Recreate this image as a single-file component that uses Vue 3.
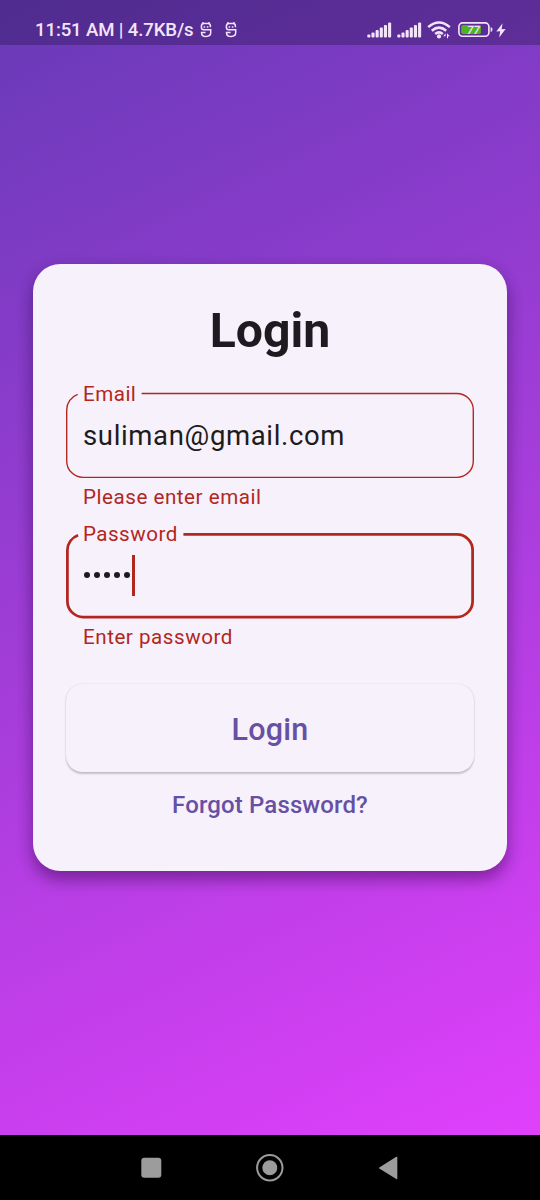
<script setup>
const signals = [0, 1]
const bars = [3, 5, 7.5, 10, 12.5, 15]
const fields = [
  {
    name: 'Email',
    value: 'suliman@gmail.com',
    error: 'Please enter email',
    outline: 'M76.6 2.5H391.8A16.5 16.5 0 0 1 408.3 19V69.9A16.5 16.5 0 0 1 391.8 86.4H18.2A16.5 16.5 0 0 1 1.7 69.9V19A16.5 16.5 0 0 1 12.7 3.4',
    focused: false,
  },
  {
    name: 'Password',
    value: 5,
    error: 'Enter password',
    outline: 'M118.4 3.3H391.8A15.8 15.8 0 0 1 407.6 19.1V70.2A15.8 15.8 0 0 1 391.8 86H18.2A15.8 15.8 0 0 1 2.4 70.2V19.1A15.8 15.8 0 0 1 13.1 4.2',
    focused: true,
  },
]
</script>

<template>
  <div class="screen">
    <header class="status">
      <span class="clock">11:51 AM | 4.7KB/s</span>
      <svg v-for="n in signals" :key="'s' + n" class="face" viewBox="0 0 12 16">
        <path d="M2.4.4 3.6 1.6M9.6.4 8.4 1.6M10.4 5.2V4Q10.4 1.6 8 1.6H4Q1.4 1.6 1.4 4.2V5.6Q1.4 7.8 3.6 7.8H10.7V10.6Q10.7 14.5 6.1 14.5Q1.5 14.5 1.5 10.4H5.6" />
        <path d="M3.6 4.9H5.2M6.8 4.9H8.4" />
      </svg>
      <span class="spacer"></span>
      <svg v-for="n in signals" :key="n" class="signal" viewBox="0 0 25 16">
        <rect v-for="(h, i) in bars" :key="i" :x="0.3 + i * 4.15" :y="15.6 - h" width="3.1" :height="h" rx="1" />
      </svg>
      <svg class="wifi" viewBox="0 0 24 18">
        <path class="arc" d="M1.2 6.1Q12-3.2 22.8 6.1M4.8 9.7Q12 3.5 19.2 9.7M8.2 13Q12 9.8 15.8 13" />
        <circle cx="12" cy="15.4" r="2.1" />
        <path d="M18.6 12.2 16.2 15.2H18.6ZM20 17.2V12.2L22.8 15.2H21V17.2Z" />
      </svg>
      <svg class="battery" viewBox="0 0 35 16">
        <rect class="shell" x="0.9" y="0.9" width="30" height="13.4" rx="3.7" />
        <rect class="charge" x="3.2" y="3.1" width="19.7" height="9" rx="1.8" />
        <path d="M32.6 5.3Q34.5 5.3 34.5 7.6T32.6 9.9Z" />
        <text x="15.4" y="11.7" text-anchor="middle">77</text>
      </svg>
      <svg class="bolt" viewBox="0 0 10 15">
        <path d="M6.6.3.3 8.4 4.2 8.2 3.2 14.6 9.6 6.1 5.6 6.3Z" />
      </svg>
    </header>

    <main class="body">
      <section class="card">
        <h1>Login</h1>
        <div v-for="f in fields" :key="f.name" class="field">
          <div class="box">
            <svg class="outline" :class="{ focused: f.focused }" viewBox="0 0 410 90"><path :d="f.outline" /></svg>
            <span class="label">{{ f.name }}</span>
            <div v-if="f.focused" class="secret">
              <i v-for="n in f.value" :key="n" class="dot"></i>
              <i class="caret"></i>
            </div>
            <div v-else class="value">{{ f.value }}</div>
          </div>
          <div class="error">{{ f.error }}</div>
        </div>
        <button class="submit"><span>Login</span></button>
        <a class="forgot">Forgot Password?</a>
      </section>
    </main>

    <nav class="nav">
      <svg viewBox="0 0 30 30"><rect x="5.3" y="4.8" width="20" height="20" rx="3" /></svg>
      <svg viewBox="0 0 30 30"><circle class="ring" cx="14.8" cy="14.8" r="12.7" /><circle cx="14.8" cy="14.8" r="7.5" /></svg>
      <svg viewBox="0 0 30 30"><path d="M23.3 4.5V25.5Q23.3 26.7 22.3 26.1L5.3 15.6Q4.4 15 5.3 14.4L22.3 3.8Q23.3 3.3 23.3 4.5Z" /></svg>
    </nav>
  </div>
</template>

<style>
body {
  margin: 0;
}
</style>

<style scoped>
.screen {
  width: 540px;
  height: 1200px;
  display: flex;
  flex-direction: column;
  background: linear-gradient(154.56deg, #673ab7, #e040fb) 0 0 / 540px 1135px no-repeat #000;
  font-family: Roboto, "Liberation Sans", sans-serif;
  overflow: hidden;
}
.status {
  height: 45px;
  box-sizing: border-box;
  padding: 15px 34px 0 35px;
  display: flex;
  align-items: center;
  background: rgba(44, 24, 84, 0.4);
  color: #f3e4fb;
  fill: #f3e4fb;
}
.clock {
  font-size: 18.6px;
  font-weight: 500;
  letter-spacing: -0.13px;
  line-height: 30px;
  width: 165px;
  white-space: nowrap;
}
.face {
  width: 12px;
  height: 16px;
  margin-right: 13px;
  fill: none;
  stroke: #f3e4fb;
  stroke-width: 1.5;
}
.spacer {
  flex: 1;
}
.signal {
  width: 25px;
  height: 16px;
  margin-right: 5px;
}
.wifi {
  width: 24px;
  height: 18px;
}
.arc {
  fill: none;
  stroke: #f3e4fb;
  stroke-width: 2.5;
}
.battery {
  width: 35px;
  height: 16px;
  margin-left: 7px;
}
.shell {
  fill: none;
  stroke: #f3e4fb;
  stroke-width: 1.6;
}
.charge {
  fill: #4db51e;
}
.battery text {
  font-size: 11.5px;
  font-weight: 500;
  font-style: italic;
}
.bolt {
  width: 10px;
  height: 15px;
  margin-left: 3px;
}
.body {
  height: 1090px;
  box-sizing: border-box;
  padding: 218.5px 33px 0;
}
.card {
  height: 607.5px;
  box-sizing: border-box;
  padding: 32px 32px 0;
  border-radius: 27.5px;
  background: #f6f1fa;
  box-shadow: 0 9px 15px rgba(40, 0, 60, 0.32), 0 5px 16px rgba(40, 0, 60, 0.18);
  display: flex;
  flex-direction: column;
}
h1 {
  margin: 0;
  height: 95.5px;
  line-height: 70px;
  font-size: 48.2px;
  font-weight: 700;
  text-align: center;
  color: #1d1b20;
}
.field {
  height: 140px;
}
.box {
  height: 90px;
  position: relative;
}
.outline {
  display: block;
  width: 410px;
  height: 90px;
  fill: none;
  stroke: #b3261e;
  stroke-width: 1.375;
}
.outline.focused {
  stroke-width: 2.75;
}
.label {
  position: absolute;
  left: 18px;
  top: -9px;
  line-height: 24px;
  font-size: 20.6px;
  letter-spacing: 0.47px;
  color: #b3261e;
}
.value,
.secret {
  position: absolute;
  left: 18px;
  top: 24px;
  height: 41px;
  line-height: 41px;
  font-size: 27.5px;
  letter-spacing: 0.65px;
  color: #1d1b20;
}
.secret {
  display: flex;
  align-items: center;
  padding-left: 1.4px;
  gap: 4px;
}
.dot {
  width: 6px;
  height: 6px;
  border-radius: 50%;
  background: #1d1b20;
  margin-top: -2px;
}
.caret {
  width: 3px;
  height: 41px;
  background: #b3261e;
  margin-left: -2.4px;
}
.error {
  padding-left: 18px;
  line-height: 33px;
  font-size: 20.6px;
  letter-spacing: 0.53px;
  color: #b3261e;
}
.submit {
  margin: 13px 1px 0;
  padding: 4px 0 0;
  height: 87.5px;
  flex: none;
  border: 0;
  border-radius: 16.5px;
  background: #f6f1fa;
  box-shadow: 0 1.4px 2px rgba(0, 0, 0, 0.2), 0 0 1.5px rgba(0, 0, 0, 0.1);
  font-family: inherit;
  font-size: 30.5px;
  font-weight: 500;
  letter-spacing: 0.2px;
  color: #6750a4;
}
.forgot {
  margin-top: 17px;
  line-height: 32px;
  text-align: center;
  font-size: 24px;
  font-weight: 500;
  letter-spacing: 0.13px;
  color: #6750a4;
}
.nav {
  height: 65px;
  display: flex;
  align-items: center;
  justify-content: center;
  gap: 89px;
  background: #000;
  fill: #9c9c9c;
}
.nav svg {
  width: 30px;
  height: 30px;
}
.ring {
  fill: none;
  stroke: #9c9c9c;
  stroke-width: 2;
}
</style>
